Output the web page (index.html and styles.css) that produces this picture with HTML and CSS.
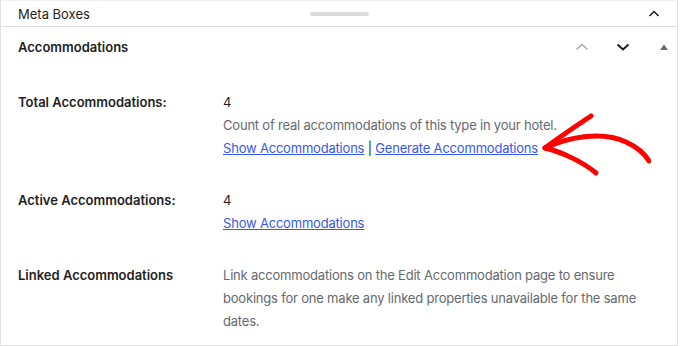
FILE: index.html
```html
<!DOCTYPE html>
<html lang="en">
  <head>
    <meta charset="utf-8" />
    <title>Accommodations</title>
    <link rel="stylesheet" href="styles.css">
  </head>
  <body>
    <div class="panel">
      <div class="meta-bar">
        <span class="meta-title">Meta Boxes</span>
        <span class="handle"></span>
        <span class="meta-end">
          <svg width="14" height="14" viewBox="0 0 14 14"><path d="M2.5 9 L7 4.5 L11.5 9" fill="none" stroke="#1e1e1e" stroke-width="1.5"/></svg>
        </span>
      </div>

      <div class="box">
        <div class="box-head">
          <h2>Accommodations</h2>
          <div class="box-actions">
            <svg width="16" height="16" viewBox="0 0 16 16"><path d="M2.5 10.5 L8 5.5 L13.5 10.5" fill="none" stroke="#a7aaad" stroke-width="1.6"/></svg>
            <svg width="16" height="16" viewBox="0 0 16 16"><path d="M2.5 5.5 L8 10.5 L13.5 5.5" fill="none" stroke="#1e1e1e" stroke-width="2"/></svg>
            <svg class="toggle" width="10" height="10" viewBox="0 0 10 10"><path d="M1 8 L5 2.5 L9 8 Z" fill="#646970"/></svg>
          </div>
        </div>

        <div class="fields">
          <div class="field">
            <div class="label">Total Accommodations:</div>
            <div class="value">
              <div>4</div>
              <div class="desc">Count of real accommodations of this type in your hotel.</div>
              <div><a href="#">Show Accommodations</a> | <a href="#">Generate Accommodations</a></div>
            </div>
          </div>

          <div class="field">
            <div class="label">Active Accommodations:</div>
            <div class="value">
              <div>4</div>
              <div><a href="#">Show Accommodations</a></div>
            </div>
          </div>

          <div class="field">
            <div class="label">Linked Accommodations</div>
            <div class="value desc">
              Link accommodations on the Edit Accommodation page to ensure bookings for one make any linked properties unavailable for the same dates.
            </div>
          </div>
        </div>

        <svg class="arrow" width="120" height="70" viewBox="530 110 120 70">
          <path d="M544 148 C565 138 600 130 625 142 C638 148 644 154 648 161" fill="none" stroke="#f00" stroke-width="5" stroke-linecap="round"/>
          <path d="M590 116 C575 126 557 138 544 148 C561 152 582 162 595 173" fill="none" stroke="#f00" stroke-width="5" stroke-linecap="round" stroke-linejoin="round"/>
        </svg>
      </div>
    </div>
  </body>
</html>
```

FILE: styles.css
```css
body {
  margin: 0;
  background: #fff;
  font-family: Inter, "Noto Sans", sans-serif;
  font-size: 13px;
  color: #1e1e1e;
}
.panel {
  width: 676px;
  border: 1px solid #e0e0e0;
  border-top-color: #f0f0f0;
}
.meta-bar {
  height: 25px;
  display: flex;
  align-items: center;
  padding: 0 16px 0 17px;
  border-bottom: 1px solid #e0e0e0;
  margin-top: -4px;
  padding-top: 4px;
}
.meta-title,
.meta-end {
  flex: 1;
}
.meta-end {
  display: flex;
  justify-content: flex-end;
}
.handle {
  width: 59px;
  height: 4px;
  border-radius: 2px;
  background: #dcdcde;
}
.box {
  position: relative;
}
.box-head {
  height: 40px;
  display: flex;
  align-items: center;
  padding: 0 8px 0 17px;
}
.box-head h2 {
  margin: 0;
  font-size: 13px;
  font-weight: 600;
  flex: 1;
}
.box-actions {
  display: flex;
  align-items: center;
  gap: 25px;
}
.box-actions .toggle {
  margin-left: 3px;
}
.fields {
  padding: 24px 17px 12px;
}
.field {
  display: flex;
  line-height: 23px;
  margin-bottom: 29px;
}
.field:last-child {
  margin-bottom: 0;
}
.label {
  width: 205px;
  flex: none;
  font-weight: 600;
}
.value {
  flex: 1;
  padding-right: 20px;
  letter-spacing: -0.2px;
}
.desc {
  color: #646970;
}
.value a {
  color: #3858e9;
}
.arrow {
  position: absolute;
  left: 530px;
  top: 83px;
}
```
